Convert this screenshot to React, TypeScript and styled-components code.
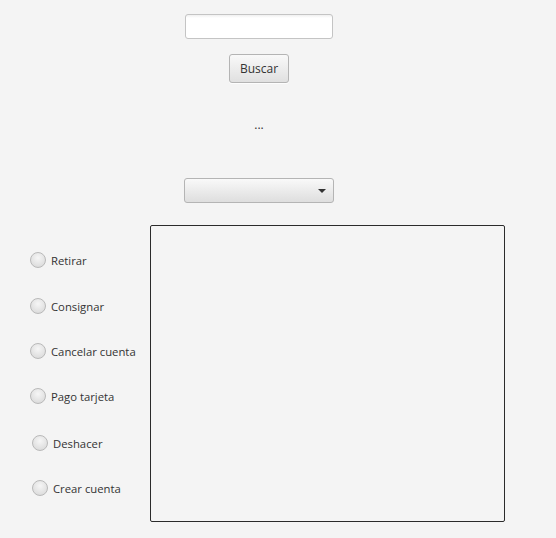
import React from "react";
import styled, { createGlobalStyle } from "styled-components";

const Global = createGlobalStyle`
  html, body { margin: 0; padding: 0; background: #f4f4f4; }
  body { font-family: "Open Sans", "Noto Sans", sans-serif; font-size: 11.3px; color: #333; }
  #root { width: 556px; height: 538px; background: #f4f4f4; }
`;

const Page = styled.div`
  width: 556px;
  height: 538px;
  display: flex;
  flex-direction: column;
`;

const Top = styled.div`
  width: 518px;
  display: flex;
  flex-direction: column;
  align-items: center;
  padding-top: 14px;
`;

const TextField = styled.input`
  box-sizing: border-box;
  width: 148px;
  height: 25px;
  border: 1px solid #c4c4c4;
  border-radius: 3px;
  background: linear-gradient(#f0f0f0 0px, #fff 3px, #fff);
  outline: none;
  margin: 0;
`;

const Button = styled.button`
  box-sizing: border-box;
  margin-top: 15px;
  width: 60px;
  height: 29px;
  border: 1px solid #b4b4b4;
  border-radius: 3px;
  background: linear-gradient(#f9f9f9, #e0e0e0);
  font-family: "Open Sans", "Noto Sans", sans-serif;
  font-size: 12px;
  color: #333;
  padding: 0;
  box-shadow: 0 1px 0 rgba(255,255,255,0.8);
`;

const Dots = styled.div`
  margin-top: 32px;
  height: 20px;
  line-height: 20px;
  font-size: 12px;
  color: #333;
`;

const Combo = styled.div`
  box-sizing: border-box;
  margin-top: 43px;
  width: 150px;
  height: 25px;
  border: 1px solid #b4b4b4;
  border-radius: 3px;
  background: linear-gradient(#f9f9f9, #dedede);
  display: flex;
  align-items: center;
  justify-content: flex-end;
  padding-right: 7px;
`;

const Arrow = styled.div`
  width: 0;
  height: 0;
  border-left: 4px solid transparent;
  border-right: 4px solid transparent;
  border-top: 4px solid #333;
`;

const Bottom = styled.div`
  display: flex;
  margin-top: 22px;
`;

const Radios = styled.div`
  width: 150px;
  display: flex;
  flex-direction: column;
  padding-top: 26px;
  gap: 27px;
`;

const RadioRow = styled.label<{ $shift: number; $extra: number }>`
  display: flex;
  align-items: center;
  height: 18px;
  padding-left: ${(p) => 30 + p.$shift}px;
  margin-top: ${(p) => p.$extra}px;
`;

const Circle = styled.span`
  box-sizing: border-box;
  width: 16px;
  height: 16px;
  border-radius: 50%;
  border: 1px solid #b9b9b9;
  background: radial-gradient(circle at 50% 35%, #f6f6f6, #dcdcdc 80%);
  margin-right: 5px;
`;

const RadioText = styled.span`
  font-size: 11.3px;
  color: #333;
`;

const Box = styled.div`
  box-sizing: border-box;
  width: 355px;
  height: 297px;
  border: 1px solid #2b2b2b;
  border-radius: 2px;
  background: #f4f4f4;
`;

const options: [string, number, number][] = [
  ["Retirar", 0, 0],
  ["Consignar", 0, 1],
  ["Cancelar cuenta", 0, 0],
  ["Pago tarjeta", 0, 0],
  ["Deshacer", 2, 2],
  ["Crear cuenta", 2, 0],
];

export default function App() {
  return (
    <Page>
      <Global />
      <Top>
        <TextField />
        <Button>Buscar</Button>
        <Dots>...</Dots>
        <Combo>
          <Arrow />
        </Combo>
      </Top>
      <Bottom>
        <Radios>
          {options.map(([t, s, e]) => (
            <RadioRow key={t} $shift={s} $extra={e}>
              <Circle />
              <RadioText>{t}</RadioText>
            </RadioRow>
          ))}
        </Radios>
        <Box />
      </Bottom>
    </Page>
  );
}
